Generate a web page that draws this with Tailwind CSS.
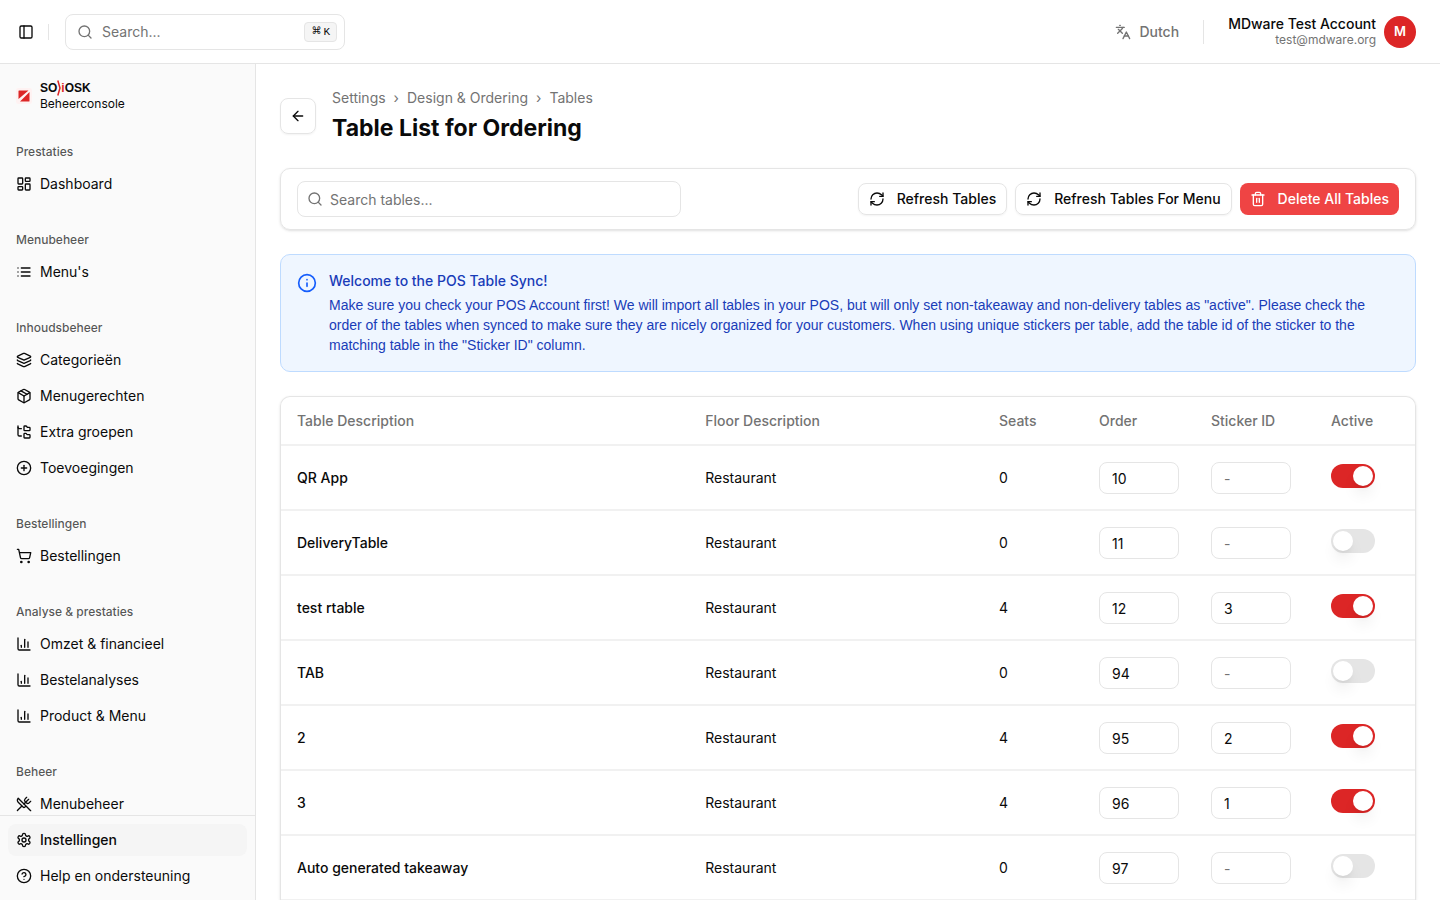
<!doctype html>
<html lang="nl">
  <head>
    <meta charset="UTF-8" />
    <meta name="viewport" content="width=device-width, initial-scale=1.0" />
    <title>Table List for Ordering</title>
    <script src="https://cdn.jsdelivr.net/npm/@tailwindcss/browser@4"></script>
  </head>

  <body class="h-screen w-full flex flex-col overflow-hidden bg-white font-['Inter',sans-serif] text-sm text-neutral-950">
    <!-- icon set, 24x24 grid -->
    <svg class="hidden">
      <symbol id="i-panel" viewBox="0 0 24 24"><rect width="18" height="18" x="3" y="3" rx="2" /><path d="M9 3v18" /></symbol>
      <symbol id="i-search" viewBox="0 0 24 24"><circle cx="11" cy="11" r="8" /><path d="m21 21-4.3-4.3" /></symbol>
      <symbol id="i-languages" viewBox="0 0 24 24"><path d="m5 8 6 6" /><path d="m4 14 6-6 2-3" /><path d="M2 5h12" /><path d="M7 2h1" /><path d="m22 22-5-10-5 10" /><path d="M14 18h6" /></symbol>
      <symbol id="i-dashboard" viewBox="0 0 24 24"><rect width="7" height="9" x="3" y="3" rx="1" /><rect width="7" height="5" x="14" y="3" rx="1" /><rect width="7" height="9" x="14" y="12" rx="1" /><rect width="7" height="5" x="3" y="16" rx="1" /></symbol>
      <symbol id="i-list" viewBox="0 0 24 24"><path d="M3 12h.01" /><path d="M3 18h.01" /><path d="M3 6h.01" /><path d="M8 12h13" /><path d="M8 18h13" /><path d="M8 6h13" /></symbol>
      <symbol id="i-layers" viewBox="0 0 24 24"><path d="M12.83 2.18a2 2 0 0 0-1.66 0L2.6 6.08a1 1 0 0 0 0 1.83l8.58 3.91a2 2 0 0 0 1.66 0l8.58-3.9a1 1 0 0 0 0-1.83z" /><path d="M2 12a1 1 0 0 0 .58.91l8.6 3.91a2 2 0 0 0 1.65 0l8.58-3.9A1 1 0 0 0 22 12" /><path d="M2 17a1 1 0 0 0 .58.91l8.6 3.91a2 2 0 0 0 1.65 0l8.58-3.9A1 1 0 0 0 22 17" /></symbol>
      <symbol id="i-package" viewBox="0 0 24 24"><path d="M11 21.73a2 2 0 0 0 2 0l7-4A2 2 0 0 0 21 16V8a2 2 0 0 0-1-1.73l-7-4a2 2 0 0 0-2 0l-7 4A2 2 0 0 0 3 8v8a2 2 0 0 0 1 1.73z" /><path d="M12 22V12" /><path d="m3.3 7 8.7 5 8.7-5" /><path d="m7.5 4.27 9 5.15" /></symbol>
      <symbol id="i-tree" viewBox="0 0 24 24"><path d="M20 10a1 1 0 0 0 1-1V6a1 1 0 0 0-1-1h-2.5a1 1 0 0 1-.8-.4l-.9-1.2A1 1 0 0 0 15 3h-2a1 1 0 0 0-1 1v5a1 1 0 0 0 1 1Z" /><path d="M20 21a1 1 0 0 0 1-1v-3a1 1 0 0 0-1-1h-2.9a1 1 0 0 1-.88-.55l-.42-.85a1 1 0 0 0-.92-.6H13a1 1 0 0 0-1 1v5a1 1 0 0 0 1 1Z" /><path d="M3 5a2 2 0 0 0 2 2h3" /><path d="M3 3v13a2 2 0 0 0 2 2h3" /></symbol>
      <symbol id="i-plus" viewBox="0 0 24 24"><circle cx="12" cy="12" r="10" /><path d="M8 12h8" /><path d="M12 8v8" /></symbol>
      <symbol id="i-cart" viewBox="0 0 24 24"><circle cx="8" cy="21" r="1" /><circle cx="19" cy="21" r="1" /><path d="M2.05 2.05h2l2.66 12.42a2 2 0 0 0 2 1.58h9.78a2 2 0 0 0 1.95-1.57l1.65-7.43H5.12" /></symbol>
      <symbol id="i-chart" viewBox="0 0 24 24"><path d="M3 3v16a2 2 0 0 0 2 2h16" /><path d="M18 17V9" /><path d="M13 17V5" /><path d="M8 17v-3" /></symbol>
      <symbol id="i-utensils" viewBox="0 0 24 24"><path d="m16 2-2.3 2.3a3 3 0 0 0 0 4.2l1.8 1.8a3 3 0 0 0 4.2 0L22 8" /><path d="M15 15 3.3 3.3a4.2 4.2 0 0 0 0 6l7.3 7.3c.7.7 2 .7 2.8 0L15 15Zm0 0 7 7" /><path d="m2.1 21.8 6.4-6.3" /><path d="m19 5-7 7" /></symbol>
      <symbol id="i-settings" viewBox="0 0 24 24"><path d="M12.22 2h-.44a2 2 0 0 0-2 2v.18a2 2 0 0 1-1 1.73l-.43.25a2 2 0 0 1-2 0l-.15-.08a2 2 0 0 0-2.73.73l-.22.38a2 2 0 0 0 .73 2.73l.15.1a2 2 0 0 1 1 1.72v.51a2 2 0 0 1-1 1.74l-.15.09a2 2 0 0 0-.73 2.73l.22.38a2 2 0 0 0 2.73.73l.15-.08a2 2 0 0 1 2 0l.43.25a2 2 0 0 1 1 1.73V20a2 2 0 0 0 2 2h.44a2 2 0 0 0 2-2v-.18a2 2 0 0 1 1-1.73l.43-.25a2 2 0 0 1 2 0l.15.08a2 2 0 0 0 2.73-.73l.22-.39a2 2 0 0 0-.73-2.73l-.15-.08a2 2 0 0 1-1-1.74v-.5a2 2 0 0 1 1-1.74l.15-.09a2 2 0 0 0 .73-2.73l-.22-.38a2 2 0 0 0-2.73-.73l-.15.08a2 2 0 0 1-2 0l-.43-.25a2 2 0 0 1-1-1.73V4a2 2 0 0 0-2-2z" /><circle cx="12" cy="12" r="3" /></symbol>
      <symbol id="i-help" viewBox="0 0 24 24"><circle cx="12" cy="12" r="10" /><path d="M9.09 9a3 3 0 0 1 5.83 1c0 2-3 3-3 3" /><path d="M12 17h.01" /></symbol>
      <symbol id="i-arrow-left" viewBox="0 0 24 24"><path d="m12 19-7-7 7-7" /><path d="M19 12H5" /></symbol>
      <symbol id="i-refresh" viewBox="0 0 24 24"><path d="M3 12a9 9 0 0 1 9-9 9.75 9.75 0 0 1 6.74 2.74L21 8" /><path d="M21 3v5h-5" /><path d="M21 12a9 9 0 0 1-9 9 9.75 9.75 0 0 1-6.74-2.74L3 16" /><path d="M8 16H3v5" /></symbol>
      <symbol id="i-trash" viewBox="0 0 24 24"><path d="M3 6h18" /><path d="M19 6v14c0 1-1 2-2 2H7c-1 0-2-1-2-2V6" /><path d="M8 6V4c0-1 1-2 2-2h4c1 0 2 1 2 2v2" /><path d="M10 11v6" /><path d="M14 11v6" /></symbol>
      <symbol id="i-info" viewBox="0 0 24 24"><circle cx="12" cy="12" r="10" /><path d="M12 16v-4" /><path d="M12 8h.01" /></symbol>
    </svg>

    <header class="h-16 shrink-0 flex items-center justify-between border-b border-neutral-200 pl-4 pr-6">
      <div class="flex items-center">
        <button type="button" aria-label="Toggle sidebar" class="p-0.5">
          <svg class="size-4 fill-none stroke-current stroke-2" stroke-linecap="round" stroke-linejoin="round"><use href="#i-panel" /></svg>
        </button>
        <div class="w-px h-4 bg-neutral-200 ml-3 mr-4"></div>
        <div class="relative w-[280px]">
          <svg class="absolute left-3 top-2.5 size-4 fill-none stroke-neutral-500 stroke-2" stroke-linecap="round" stroke-linejoin="round"><use href="#i-search" /></svg>
          <input type="text" aria-label="Search" placeholder="Search..." class="w-full h-9 rounded-lg border border-neutral-200 pl-9 pr-12 placeholder:text-neutral-500" />
          <kbd class="absolute right-2 top-2 h-5 px-1.5 flex items-center gap-0.5 rounded border border-neutral-200 bg-neutral-100 font-['Liberation_Mono','DejaVu_Sans',monospace] text-[11px] leading-5"><span class="text-[10px]">⌘</span><span>K</span></kbd>
        </div>
      </div>

      <div class="flex items-center">
        <button type="button" class="flex items-center gap-2 font-medium text-neutral-500">
          <svg class="size-4 fill-none stroke-current stroke-2" stroke-linecap="round" stroke-linejoin="round"><use href="#i-languages" /></svg>
          Dutch
        </button>
        <div class="w-px h-6 bg-neutral-200 mx-6"></div>
        <div class="flex items-center gap-2">
          <div class="text-right">
            <p class="font-medium leading-4">MDware Test Account</p>
            <p class="text-xs leading-4 text-neutral-500">test@mdware.org</p>
          </div>
          <div class="size-8 rounded-full bg-[#dc2626] text-[13px] text-white font-semibold flex items-center justify-center">M</div>
        </div>
      </div>
    </header>

    <div class="flex flex-1 min-h-0">
      <aside class="w-64 shrink-0 flex flex-col border-r border-neutral-200 bg-neutral-50">
        <div class="h-16 shrink-0 flex items-center gap-2 px-4">
          <svg class="size-4" viewBox="0 0 16 16">
            <rect width="16" height="16" rx="2" class="fill-red-50" />
            <path d="M3 2.5h9.5L2.5 11V3a.5.5 0 0 1 .5-.5ZM13.5 4v9a.5.5 0 0 1-.5.5H4Z" class="fill-[#dc2626]" />
          </svg>
          <div>
            <div class="h-4 flex items-center font-['Liberation_Sans_Narrow','Liberation_Sans',sans-serif] text-xs font-bold leading-4">
              <span>SO</span>
              <svg class="h-4 w-1 fill-none stroke-[#dc2626] stroke-[1.5]" viewBox="0 0 4 16"><path d="M.8.5 3 8 .8 15.5" /></svg>
              <span class="text-[#dc2626]">i</span><span>OSK</span>
            </div>
            <p class="text-xs leading-4">Beheerconsole</p>
          </div>
        </div>

        <nav id="nav" class="flex-1 min-h-0 overflow-hidden flex flex-col gap-2"></nav>

        <div class="shrink-0 flex flex-col gap-1 border-t border-neutral-200 p-2">
          <a href="#" class="h-8 shrink-0 flex items-center gap-2 rounded-lg px-2 bg-neutral-100 font-medium">
            <svg class="size-4 fill-none stroke-current stroke-2" stroke-linecap="round" stroke-linejoin="round"><use href="#i-settings" /></svg>
            Instellingen
          </a>
          <a href="#" class="h-8 shrink-0 flex items-center gap-2 rounded-lg px-2">
            <svg class="size-4 fill-none stroke-current stroke-2" stroke-linecap="round" stroke-linejoin="round"><use href="#i-help" /></svg>
            Help en ondersteuning
          </a>
        </div>
      </aside>

      <main class="flex-1 min-w-0 overflow-hidden px-6 pt-6 flex flex-col gap-6">
        <div class="shrink-0 flex items-center gap-4">
          <button type="button" aria-label="Back" class="size-9 flex items-center justify-center rounded-lg border border-neutral-200 shadow-xs">
            <svg class="size-4 fill-none stroke-current stroke-2" stroke-linecap="round" stroke-linejoin="round"><use href="#i-arrow-left" /></svg>
          </button>
          <div>
            <nav class="flex gap-2 text-neutral-500">
              <a href="#">Settings</a><span>›</span><a href="#">Design &amp; Ordering</a><span>›</span><a href="#">Tables</a>
            </nav>
            <h1 class="mt-1 text-[23px] leading-8 font-bold">Table List for Ordering</h1>
          </div>
        </div>

        <div class="shrink-0 flex items-center justify-between rounded-[10px] border border-neutral-200 px-4 py-3 shadow-sm">
          <div class="relative w-96">
            <svg class="absolute left-2.5 top-2.5 size-4 fill-none stroke-neutral-500 stroke-2" stroke-linecap="round" stroke-linejoin="round"><use href="#i-search" /></svg>
            <input type="text" aria-label="Search tables" placeholder="Search tables..." class="w-full h-9 rounded-lg border border-neutral-200 pl-8 pr-3 placeholder:text-neutral-500" />
          </div>
          <div class="flex gap-2 font-medium">
            <button type="button" class="h-8 flex items-center gap-3 rounded-lg border border-neutral-200 px-2.5 shadow-xs">
              <svg class="size-4 fill-none stroke-current stroke-2" stroke-linecap="round" stroke-linejoin="round"><use href="#i-refresh" /></svg>
              Refresh Tables
            </button>
            <button type="button" class="h-8 flex items-center gap-3 rounded-lg border border-neutral-200 px-2.5 shadow-xs">
              <svg class="size-4 fill-none stroke-current stroke-2" stroke-linecap="round" stroke-linejoin="round"><use href="#i-refresh" /></svg>
              Refresh Tables For Menu
            </button>
            <button type="button" class="h-8 flex items-center gap-3 rounded-lg bg-[#ef4444] text-white px-2.5">
              <svg class="size-4 fill-none stroke-current stroke-2" stroke-linecap="round" stroke-linejoin="round"><use href="#i-trash" /></svg>
              Delete All Tables
            </button>
          </div>
        </div>

        <div class="shrink-0 flex gap-3 rounded-[10px] border border-blue-200 bg-blue-50 p-4 text-blue-800">
          <svg class="mt-0.5 size-5 shrink-0 fill-none stroke-blue-600 stroke-2" stroke-linecap="round" stroke-linejoin="round"><use href="#i-info" /></svg>
          <div>
            <h2 class="font-medium">Welcome to the POS Table Sync!</h2>
            <p class="mt-1 font-['Liberation_Sans',sans-serif]">Make sure you check your POS Account first! We will import all tables in your POS, but will only set non-takeaway and non-delivery tables as "active". Please check the order of the tables when synced to make sure they are nicely organized for your customers. When using unique stickers per table, add the table id of the sticker to the matching table in the "Sticker ID" column.</p>
          </div>
        </div>

        <div class="flex-1 min-h-0 overflow-hidden rounded-t-[10px] border border-b-0 border-neutral-200 shadow-sm">
          <table class="w-full table-fixed text-left">
            <colgroup>
              <col class="w-[36%]" />
              <col />
              <col class="w-[100px]" />
              <col class="w-[112px]" />
              <col class="w-[120px]" />
              <col class="w-[100px]" />
            </colgroup>
            <thead>
              <tr class="h-12 border-b-2 border-[#f1f1f1] text-neutral-500">
                <th class="px-4 font-medium">Table Description</th>
                <th class="px-4 font-medium">Floor Description</th>
                <th class="px-4 font-medium">Seats</th>
                <th class="px-4 font-medium">Order</th>
                <th class="px-4 font-medium">Sticker ID</th>
                <th class="px-4 font-medium">Active</th>
              </tr>
            </thead>
            <tbody id="rows"></tbody>
          </table>
        </div>
      </main>
    </div>

    <script>
      const groups = [
        { label: "Prestaties", items: [["dashboard", "Dashboard"]] },
        { label: "Menubeheer", items: [["list", "Menu's"]] },
        { label: "Inhoudsbeheer", items: [["layers", "Categorieën"], ["package", "Menugerechten"], ["tree", "Extra groepen"], ["plus", "Toevoegingen"]] },
        { label: "Bestellingen", items: [["cart", "Bestellingen"]] },
        { label: "Analyse &amp; prestaties", items: [["chart", "Omzet &amp; financieel"], ["chart", "Bestelanalyses"], ["chart", "Product &amp; Menu"]] },
        { label: "Beheer", items: [["utensils", "Menubeheer"]] },
      ];

      const tables = [
        { name: "QR App", seats: 0, order: 10, sticker: "", active: true },
        { name: "DeliveryTable", seats: 0, order: 11, sticker: "", active: false },
        { name: "test rtable", seats: 4, order: 12, sticker: "3", active: true },
        { name: "TAB", seats: 0, order: 94, sticker: "", active: false },
        { name: "2", seats: 4, order: 95, sticker: "2", active: true },
        { name: "3", seats: 4, order: 96, sticker: "1", active: true },
        { name: "Auto generated takeaway", seats: 0, order: 97, sticker: "", active: false },
      ];

      document.querySelector("#nav").innerHTML = groups.map(group => `
        <div class="shrink-0 p-2">
          <p class="h-8 flex items-center px-2 text-xs font-medium text-neutral-950/70">${group.label}</p>
          <div class="flex flex-col gap-1">
            ${group.items.map(([icon, text]) => `
              <a href="#" class="h-8 flex items-center gap-2 rounded-lg px-2">
                <svg class="size-4 fill-none stroke-current stroke-2" stroke-linecap="round" stroke-linejoin="round"><use href="#i-${icon}" /></svg>
                ${text}
              </a>`).join("")}
          </div>
        </div>`).join("");

      document.querySelector("#rows").innerHTML = tables.map(table => `
        <tr class="border-b-2 border-[#f1f1f1]">
          <td class="px-4 font-medium">${table.name}</td>
          <td class="px-4">Restaurant</td>
          <td class="px-4">${table.seats}</td>
          <td class="px-4 pt-4 pb-[15px]"><input type="text" inputmode="numeric" aria-label="Order of ${table.name}" value="${table.order}" class="block w-20 h-8 rounded-lg border border-neutral-200 px-3" /></td>
          <td class="px-4 pt-4 pb-[15px]"><input type="text" aria-label="Sticker ID of ${table.name}" value="${table.sticker}" placeholder="-" class="block w-20 h-8 rounded-lg border border-neutral-200 px-3 placeholder:text-neutral-500" /></td>
          <td class="px-4 pb-1"><input type="checkbox" role="switch" aria-label="${table.name} active" ${table.active ? "checked" : ""} class="block appearance-none w-11 h-6 p-0.5 rounded-full bg-neutral-200 checked:bg-[#dc2626] before:block before:size-5 before:rounded-full before:bg-white before:shadow-lg before:content-[''] checked:before:translate-x-5" /></td>
        </tr>`).join("");
    </script>
  </body>
</html>
